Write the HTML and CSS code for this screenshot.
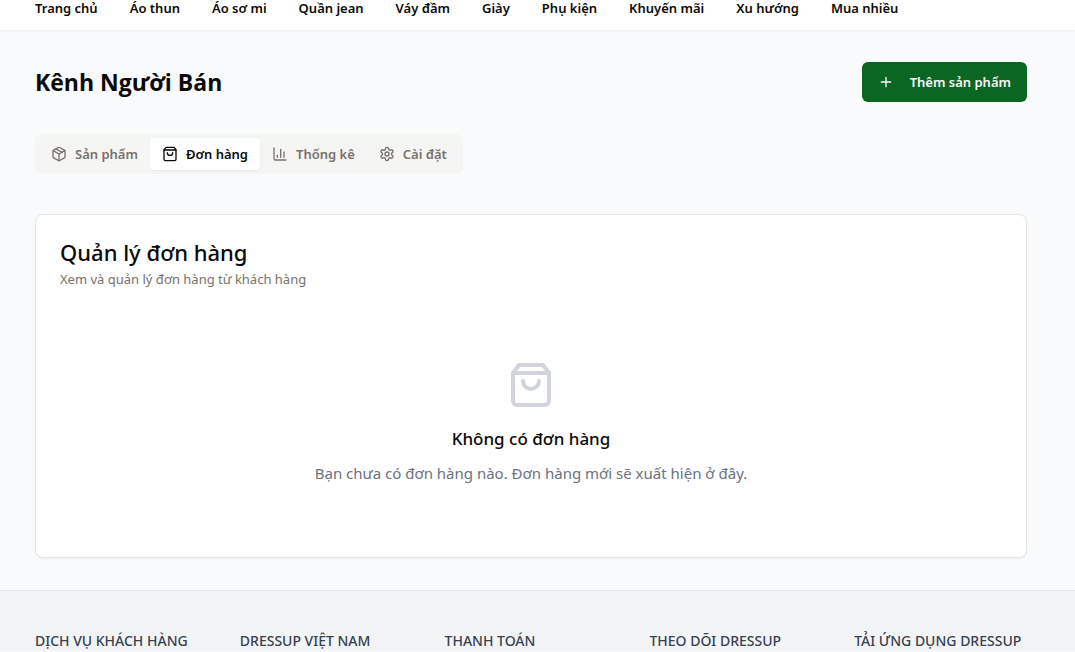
FILE: index.html
```html
<!DOCTYPE html>
<html lang="vi">
<head>
<meta charset="utf-8">
<meta name="viewport" content="width=device-width, initial-scale=1">
<title>Kênh Người Bán</title>
<link rel="stylesheet" href="styles.css">
</head>
<body>
<header class="site-header">
  <nav class="nav" aria-label="Danh mục">
    <a href="#">Trang chủ</a>
    <a href="#">Áo thun</a>
    <a href="#">Áo sơ mi</a>
    <a href="#">Quần jean</a>
    <a href="#">Váy đầm</a>
    <a href="#">Giày</a>
    <a href="#">Phụ kiện</a>
    <a href="#">Khuyến mãi</a>
    <a href="#">Xu hướng</a>
    <a href="#">Mua nhiều</a>
  </nav>
</header>
<main class="main">
  <div class="page-head">
    <h1 class="page-title">Kênh Người Bán</h1>
    <button class="add-button" type="button">
      <svg class="icon" viewBox="0 0 24 24" aria-hidden="true"><path d="M5 12h14M12 5v14"/></svg>
      Thêm sản phẩm
    </button>
  </div>
  <div class="tabs" role="tablist">
    <button class="tab" type="button" role="tab" aria-selected="false">
      <svg class="icon" viewBox="0 0 24 24" aria-hidden="true"><path d="m7.5 4.27 9 5.15"/><path d="M21 8a2 2 0 0 0-1-1.73l-7-4a2 2 0 0 0-2 0l-7 4A2 2 0 0 0 3 8v8a2 2 0 0 0 1 1.73l7 4a2 2 0 0 0 2 0l7-4A2 2 0 0 0 21 16Z"/><path d="m3.3 7 8.7 5 8.7-5"/><path d="M12 22V12"/></svg>
      Sản phẩm
    </button>
    <button class="tab tab-active" type="button" role="tab" aria-selected="true">
      <svg class="icon" viewBox="0 0 24 24" aria-hidden="true"><path d="M6 2 3 6v14a2 2 0 0 0 2 2h14a2 2 0 0 0 2-2V6l-3-4Z"/><path d="M3 6h18"/><path d="M16 10a4 4 0 0 1-8 0"/></svg>
      Đơn hàng
    </button>
    <button class="tab" type="button" role="tab" aria-selected="false">
      <svg class="icon" viewBox="0 0 24 24" aria-hidden="true"><path d="M3 3v16a2 2 0 0 0 2 2h16"/><path d="M18 17V9"/><path d="M13 17V5"/><path d="M8 17v-3"/></svg>
      Thống kê
    </button>
    <button class="tab" type="button" role="tab" aria-selected="false">
      <svg class="icon" viewBox="0 0 24 24" aria-hidden="true"><path d="M12.22 2h-.44a2 2 0 0 0-2 2v.18a2 2 0 0 1-1 1.73l-.43.25a2 2 0 0 1-2 0l-.15-.08a2 2 0 0 0-2.73.73l-.22.38a2 2 0 0 0 .73 2.73l.15.1a2 2 0 0 1 1 1.72v.51a2 2 0 0 1-1 1.74l-.15.09a2 2 0 0 0-.73 2.73l.22.38a2 2 0 0 0 2.73.73l.15-.08a2 2 0 0 1 2 0l.43.25a2 2 0 0 1 1 1.73V20a2 2 0 0 0 2 2h.44a2 2 0 0 0 2-2v-.18a2 2 0 0 1 1-1.73l.43-.25a2 2 0 0 1 2 0l.15.08a2 2 0 0 0 2.73-.73l.22-.39a2 2 0 0 0-.73-2.73l-.15-.08a2 2 0 0 1-1-1.74v-.5a2 2 0 0 1 1-1.74l.15-.09a2 2 0 0 0 .73-2.73l-.22-.38a2 2 0 0 0-2.73-.73l-.15.08a2 2 0 0 1-2 0l-.43-.25a2 2 0 0 1-1-1.73V4a2 2 0 0 0-2-2z"/><circle cx="12" cy="12" r="3"/></svg>
      Cài đặt
    </button>
  </div>
  <section class="card" role="tabpanel">
    <h2 class="card-title">Quản lý đơn hàng</h2>
    <p class="card-subtitle">Xem và quản lý đơn hàng từ khách hàng</p>
    <div class="empty">
      <svg class="empty-icon" viewBox="0 0 24 24" aria-hidden="true"><path d="M6 2 3 6v14a2 2 0 0 0 2 2h14a2 2 0 0 0 2-2V6l-3-4Z"/><path d="M3 6h18"/><path d="M16 10a4 4 0 0 1-8 0"/></svg>
      <h3 class="empty-title">Không có đơn hàng</h3>
      <p class="empty-text">Bạn chưa có đơn hàng nào. Đơn hàng mới sẽ xuất hiện ở đây.</p>
    </div>
  </section>
</main>
<footer class="footer">
  <h3>DỊCH VỤ KHÁCH HÀNG</h3>
  <h3>DRESSUP VIỆT NAM</h3>
  <h3>THANH TOÁN</h3>
  <h3>THEO DÕI DRESSUP</h3>
  <h3>TẢI ỨNG DỤNG DRESSUP</h3>
</footer>
</body>
</html>
```
FILE: styles.css
```css
* {
  box-sizing: border-box;
}

body,
h1,
h2,
h3,
p {
  margin: 0;
}

body {
  background: #f9fafb;
  color: #0c0a09;
  font-family: "Segoe UI", "Noto Sans", "Open Sans", sans-serif;
  font-size: 13px;
  line-height: 20px;
}

button {
  border: 0;
  cursor: pointer;
  font: inherit;
}

.site-header {
  background: #fff;
  box-shadow: 0 1px 2px rgba(0, 0, 0, 0.06);
  padding: 0 48px 14px 35px;
}

.nav {
  display: flex;
  gap: 32px;
  line-height: 16px;
}

.nav a {
  color: #0c0a09;
  font-weight: 600;
  text-decoration: none;
  white-space: nowrap;
}

.main {
  padding: 32px 48px 32px 35px;
}

.page-head {
  align-items: center;
  display: flex;
  justify-content: space-between;
  margin-bottom: 32px;
}

.page-title {
  font-family: "Segoe UI", "Open Sans", "Noto Sans", sans-serif;
  font-size: 23px;
  font-weight: 700;
  line-height: 32px;
}

.icon {
  fill: none;
  flex: none;
  height: 16px;
  stroke: currentColor;
  stroke-linecap: round;
  stroke-linejoin: round;
  stroke-width: 2;
  width: 16px;
}

.add-button {
  align-items: center;
  background: #0b6623;
  border-radius: 6px;
  color: #fafaf9;
  display: flex;
  font-weight: 600;
  gap: 16px;
  height: 40px;
  padding: 0 16px;
}

.tabs {
  background: #f5f5f4;
  border-radius: 6px;
  display: inline-flex;
  padding: 4px;
}

.tab {
  align-items: center;
  background: none;
  border-radius: 4px;
  color: #78716c;
  display: flex;
  font-weight: 600;
  gap: 8px;
  height: 32px;
  padding: 0 12px;
  white-space: nowrap;
}

.tab-active {
  background: #fff;
  box-shadow: 0 1px 2px rgba(0, 0, 0, 0.05);
  color: #0c0a09;
}

.card {
  background: #fff;
  border: 1px solid #e7e5e4;
  border-radius: 8px;
  box-shadow: 0 1px 2px rgba(0, 0, 0, 0.05);
  margin-top: 40px;
  padding: 24px;
}

.card-title {
  font-size: 22px;
  font-weight: 500;
  line-height: 26px;
}

.card-subtitle {
  color: #78716c;
  margin-top: 4px;
}

.empty {
  align-items: center;
  display: flex;
  flex-direction: column;
  padding: 72px 0 48px;
  text-align: center;
}

.empty-icon {
  fill: none;
  height: 48px;
  stroke: #d1d5db;
  stroke-linecap: round;
  stroke-linejoin: round;
  stroke-width: 2;
  width: 48px;
}

.empty-title {
  font-size: 17px;
  font-weight: 500;
  line-height: 28px;
  margin-top: 16px;
}

.empty-text {
  color: #6b7280;
  font-size: 15px;
  line-height: 24px;
  margin-top: 8px;
}

.footer {
  background: #f3f4f6;
  border-top: 1px solid #e5e7eb;
  display: grid;
  gap: 32px;
  grid-template-columns: repeat(5, 1fr);
  padding: 40px 48px 0 35px;
}

.footer h3 {
  color: #374151;
  font-size: 14px;
  font-weight: 500;
  white-space: nowrap;
}
```
